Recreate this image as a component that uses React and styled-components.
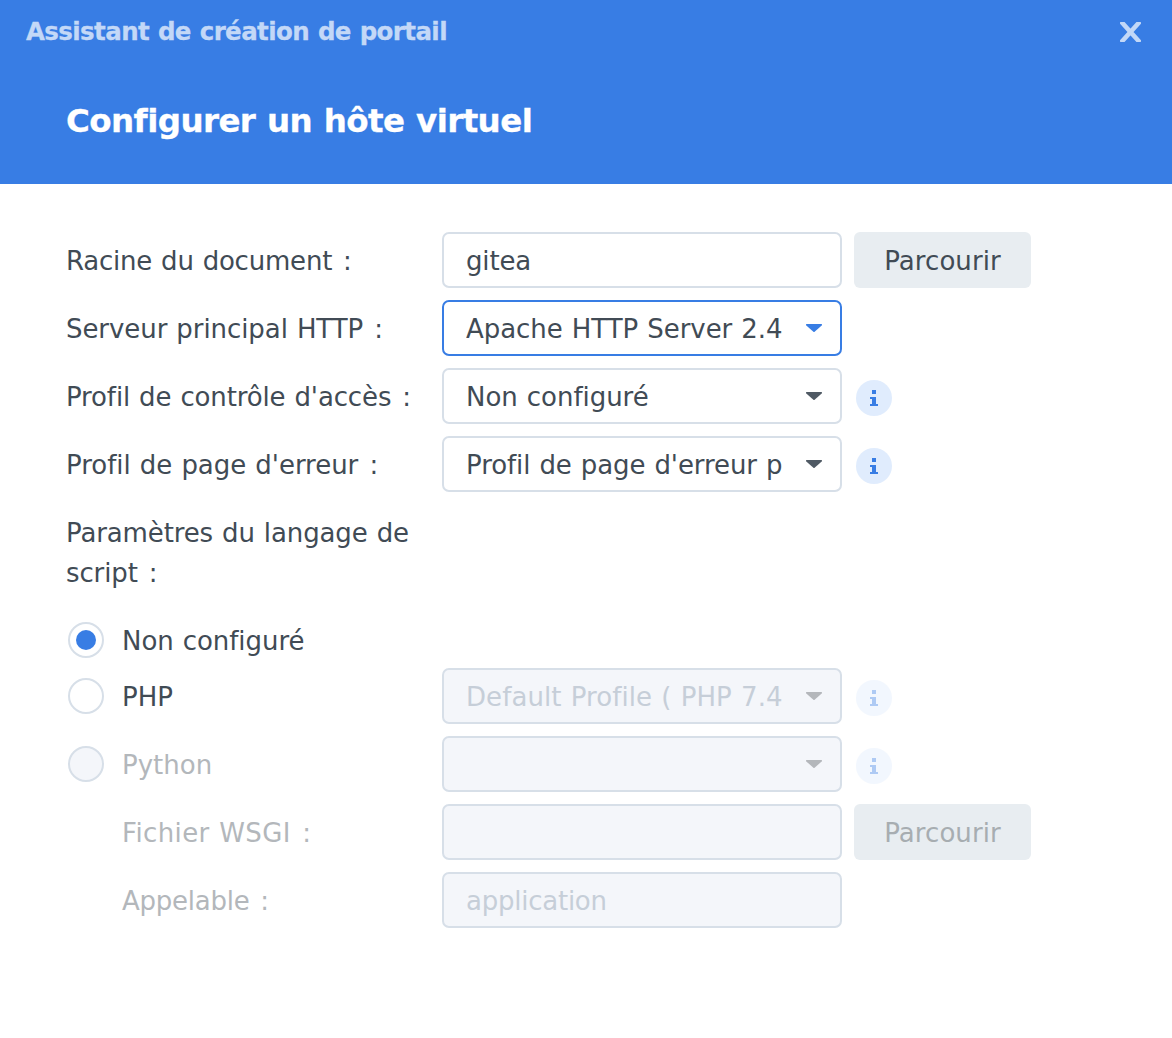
import React from 'react';
import styled, { createGlobalStyle } from 'styled-components';

const c = {
  blue: '#387de4',
  text: '#414b55',
  border: '#d7dfe8',
  disabledText: '#b3b7bb',
  placeholder: '#c6ced8',
  disabledBg: '#f4f6fa',
};

const GlobalStyle = createGlobalStyle`
  *, *::before, *::after { box-sizing: border-box; }
  body { margin: 0; background: #fff; }
  body, input, button { font-family: "DejaVu Sans", Verdana, sans-serif; }
`;

const Dialog = styled.main`
  width: 1172px;
  min-height: 1038px;
  background: #fff;
  color: ${c.text};
  font-size: 26px;
  line-height: 40px;
  word-spacing: 0.9px;
`;

const Header = styled.header`
  height: 184px;
  background: ${c.blue};
`;

const TitleBar = styled.div`
  display: flex;
  align-items: center;
  justify-content: space-between;
  height: 64px;
  padding: 0 26px;
`;

const WindowTitle = styled.div`
  font-size: 24.5px;
  font-weight: 700;
  line-height: 32px;
  letter-spacing: -0.6px;
  color: #c3d8f7;
  -webkit-text-stroke: 0.3px #c3d8f7;
`;

const CloseButton = styled.button`
  display: flex;
  padding: 0;
  margin-right: 5px;
  border: 0;
  background: none;
`;

const Heading = styled.h1`
  margin: 0;
  padding: 37px 66px 0;
  font-size: 32.5px;
  font-weight: 700;
  line-height: 40px;
  letter-spacing: -0.58px;
  color: #fff;
  -webkit-text-stroke: 0.3px #fff;
`;

const Form = styled.form`
  display: flex;
  flex-direction: column;
  gap: 12px;
  padding: 48px 66px 0;
`;

const RadioGroup = styled.div`
  display: flex;
  flex-direction: column;
`;

const Row = styled.div`
  display: grid;
  grid-template-columns: 364px 400px auto;
  column-gap: 12px;
  justify-content: start;
  align-items: center;
  min-height: 56px;
`;

const Text = styled.span`
  padding-top: 2px;
  letter-spacing: ${(p) => p.$spacing || 0}px;
`;

const Label = styled(Text)`
  padding: 9px 0 7px ${(p) => (p.$indent ? 56 : 0)}px;
  color: ${(p) => (p.$disabled ? c.disabledText : c.text)};
`;

const Colon = styled.span`
  margin-left: 2px;
`;

const RadioLabel = styled.label`
  display: flex;
  align-items: center;
  gap: 18px;
  padding-left: 2px;
  color: ${(p) => (p.$disabled ? c.disabledText : c.text)};
`;

const Radio = styled.input.attrs({ type: 'radio' })`
  appearance: none;
  display: grid;
  place-items: center;
  width: 36px;
  height: 36px;
  margin: 0;
  border: 2px solid ${c.border};
  border-radius: 50%;
  background: #fff;

  &:disabled { background: ${c.disabledBg}; }

  &:checked::before {
    content: '';
    width: 20px;
    height: 20px;
    border-radius: 50%;
    background: ${c.blue};
  }
`;

const Input = styled.input`
  width: 100%;
  height: 56px;
  padding: 2px 22px 0;
  border: 2px solid ${c.border};
  border-radius: 7px;
  background: #fff;
  color: ${c.text};
  font-size: 26px;
  letter-spacing: ${(p) => p.$spacing || 0}px;
  outline: 0;

  &::placeholder { color: ${c.placeholder}; opacity: 1; }
  &:disabled { background: ${c.disabledBg}; }
`;

const SelectBox = styled.div`
  display: flex;
  align-items: center;
  justify-content: space-between;
  height: 56px;
  padding: 0 18px 0 22px;
  border: 2px solid ${(p) => (p.$active ? c.blue : c.border)};
  border-radius: 7px;
  background: ${(p) => (p.$disabled ? c.disabledBg : '#fff')};
  color: ${(p) => (p.$disabled ? c.placeholder : c.text)};
`;

const SelectValue = styled(Text)`
  width: 318px;
  overflow: hidden;
  white-space: nowrap;
`;

const BrowseButton = styled.button`
  width: 177px;
  height: 56px;
  padding: 2px 0 0;
  border: 0;
  border-radius: 6px;
  background: #e8edf1;
  color: ${c.text};
  font-size: 26px;
  letter-spacing: 0.068px;

  &:disabled { color: #a7adb1; }
`;

const InfoBadge = styled.span`
  display: block;
  width: 36px;
  height: 36px;
  margin: 4px 0 0 2px;
  border-radius: 50%;
  background: #e0ecfd;
  opacity: ${(p) => (p.$disabled ? 0.4 : 1)};
`;

const Glyph = styled.svg`
  display: block;
  flex: none;
`;

function Info({ disabled }) {
  return (
    <InfoBadge $disabled={disabled}>
      <Glyph width="36" height="36" viewBox="0 0 36 36" fill={c.blue} shapeRendering="crispEdges">
        <path d="M16 10h4v4h-4zM14 17h6v7h2v2h-8v-2h2v-5h-2z" />
      </Glyph>
    </InfoBadge>
  );
}

function Select({ value, spacing, active, disabled }) {
  const fill = active ? c.blue : disabled ? '#b4b7bb' : '#505a64';
  return (
    <SelectBox $active={active} $disabled={disabled}>
      <SelectValue $spacing={spacing}>{value}</SelectValue>
      <Glyph width="16" height="8" viewBox="0 0 16 8" fill={fill}>
        <path d="M0.6 0H15.4Q16 0 16 0.6V1.2L8.6 7.7Q8 8.2 7.4 7.7L0 1.2V0.6Q0 0 0.6 0Z" />
      </Glyph>
    </SelectBox>
  );
}

export default function App() {
  return (
    <>
      <GlobalStyle />
      <Dialog>
        <Header>
          <TitleBar>
            <WindowTitle>Assistant de création de portail</WindowTitle>
            <CloseButton type="button" aria-label="Fermer">
              <Glyph width="21" height="20" viewBox="0 0 21 20" fill="none" stroke="#c3d8f7" strokeWidth="4.6">
                <path d="M1 -0.5L20 20.5M20 -0.5L1 20.5" />
              </Glyph>
            </CloseButton>
          </TitleBar>
          <Heading>Configurer un hôte virtuel</Heading>
        </Header>

        <Form>
          <Row>
            <Label $spacing={-0.21}>Racine du document <Colon>:</Colon></Label>
            <Input defaultValue="gitea" $spacing={-0.15} />
            <BrowseButton type="button">Parcourir</BrowseButton>
          </Row>
          <Row>
            <Label $spacing={-0.07}>Serveur principal HTTP <Colon>:</Colon></Label>
            <Select active value="Apache HTTP Server 2.4" spacing={-0.05} />
          </Row>
          <Row>
            <Label $spacing={-0.13}>Profil de contrôle d'accès <Colon>:</Colon></Label>
            <Select value="Non configuré" spacing={-0.04} />
            <Info />
          </Row>
          <Row>
            <Label $spacing={-0.03}>Profil de page d'erreur <Colon>:</Colon></Label>
            <Select value="Profil de page d'erreur p" spacing={-0.09} />
            <Info />
          </Row>
          <Row>
            <Label $spacing={-0.12}>Paramètres du langage de script <Colon>:</Colon></Label>
          </Row>

          <RadioGroup>
            <Row>
              <RadioLabel>
                <Radio name="language" defaultChecked />
                <Text $spacing={-0.06}>Non configuré</Text>
              </RadioLabel>
            </Row>
            <Row>
              <RadioLabel>
                <Radio name="language" />
                <Text $spacing={0.035}>PHP</Text>
              </RadioLabel>
              <Select disabled value="Default Profile ( PHP 7.4" spacing={0.07} />
              <Info disabled />
            </Row>
          </RadioGroup>
          <Row>
            <RadioLabel $disabled>
              <Radio name="language" disabled />
              <Text>Python</Text>
            </RadioLabel>
            <Select disabled value="" />
            <Info disabled />
          </Row>
          <Row>
            <Label $indent $disabled $spacing={0.38}>Fichier WSGI <Colon>:</Colon></Label>
            <Input disabled />
            <BrowseButton type="button" disabled>Parcourir</BrowseButton>
          </Row>
          <Row>
            <Label $indent $disabled $spacing={-0.25}>Appelable <Colon>:</Colon></Label>
            <Input disabled placeholder="application" $spacing={-0.24} />
          </Row>
        </Form>
      </Dialog>
    </>
  );
}
